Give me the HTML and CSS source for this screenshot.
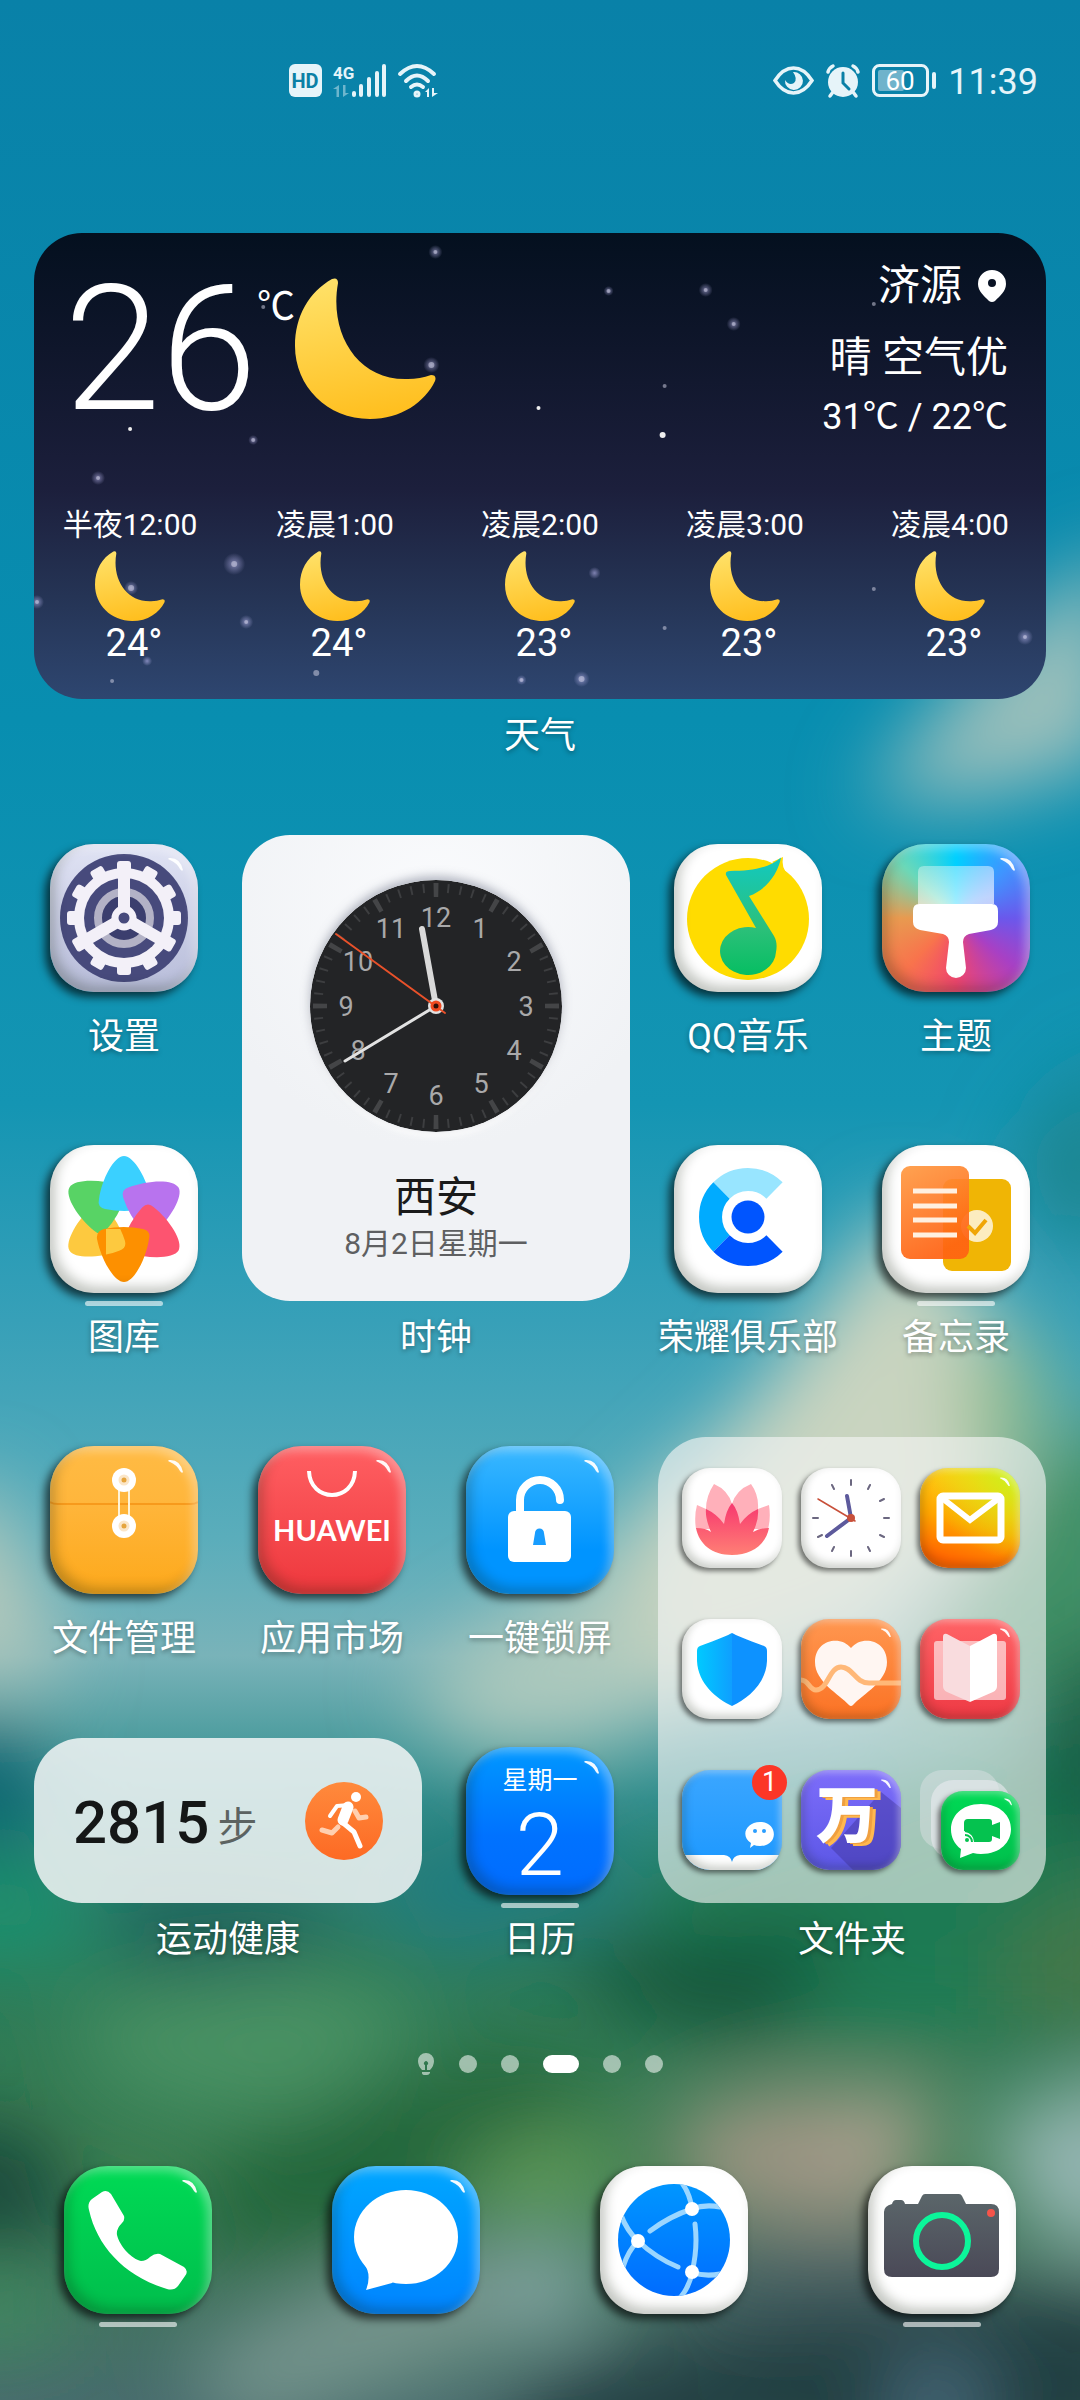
FILE: index.html
```html
<!DOCTYPE html>
<html lang="zh-CN">
<head>
  <meta charset="UTF-8" />
  <meta name="viewport" content="width=device-width, initial-scale=1.0" />
  <title>桌面</title>
  <link rel="stylesheet" href="styles.css">
</head>
<body>
  <!-- 共用图形 -->
  <svg class="defs" aria-hidden="true">
    <defs>
      <linearGradient id="moonFill" x1="0.3" y1="0" x2="0.5" y2="1">
        <stop offset="0" stop-color="#ffe168" />
        <stop offset="1" stop-color="#ffbf1f" />
      </linearGradient>
      <symbol id="moon" viewBox="0 0 141 141">
        <path fill="url(#moonFill)" d="M37 1Q43-1 43 5C34 55 62 103 113 101Q125 101 136 97Q142 97 140 103C130 124 106 141 75 141C32 141 0 108 0 68C0 38 14 14 37 1z" />
      </symbol>
      <symbol id="shine" viewBox="0 0 148 148">
        <path fill="#fff" opacity="0.950" d="M119 14Q130 13 133 26Q132 28 130 25Q127 19 120 16Q117 15 119 14z" />
      </symbol>
    </defs>
  </svg>

  <!-- 壁纸 -->
  <svg class="wallpaper" viewBox="0 0 1080 2400" preserveAspectRatio="none" aria-hidden="true">
    <defs>
      <linearGradient id="sky" x1="0" y1="0" x2="0" y2="1">
        <stop offset="0" stop-color="#0981a8" />
        <stop offset="0.3" stop-color="#088eb0" />
        <stop offset="0.46" stop-color="#1495b3" />
        <stop offset="0.55" stop-color="#37a0b8" />
        <stop offset="0.64" stop-color="#5aadbb" />
        <stop offset="0.69" stop-color="#79b3b9" />
        <stop offset="0.75" stop-color="#2f8d8c" />
        <stop offset="0.82" stop-color="#2b7a58" />
        <stop offset="0.9" stop-color="#3a7c50" />
        <stop offset="1" stop-color="#476c6c" />
      </linearGradient>
      <filter id="soft" x="-50%" y="-50%" width="200%" height="200%"><feGaussianBlur stdDeviation="40" /></filter>
    </defs>
    <rect width="1080" height="2400" fill="url(#sky)" />
    <g filter="url(#soft)">
      <path fill="#9cc0bb" d="M860 800L1000 640L1120 540V760L980 800z" />
      <path fill="#1d8289" d="M1020 1150L1120 1040V1260L1050 1230z" />
      <path fill="#c9d4c0" d="M740 1420L850 1270L900 1200L1000 1330L1010 1500L880 1640L700 1700L560 1680L610 1540z" />
      <path fill="#8dba88" d="M960 1360L1040 1330L1050 1440L980 1500z" />
      <path fill="#b6c9bb" d="M-80 1520L-10 1480L40 1600L60 1680L-80 1670z" />
      <path fill="#adc9bd" d="M400 1690L520 1610L640 1540V1740L480 1750z" />
      <path fill="#3f9066" d="M1000 1500L1160 1380V1760L1000 1700L880 1720z" />
      <path fill="#1c7a52" d="M660 1860L760 1840L1140 1700V2040H640z" />
      <path fill="#145a40" d="M1040 1680L1140 1620V1860L1040 1820z" />
      <path fill="#44774a" d="M1000 1940L1140 1860V2040L1000 2020z" />
      <path fill="#0f6470" d="M-80 1720L30 1740L60 1820L0 1860L-80 1840z" />
      <path fill="#1d8f6c" d="M-80 1860L60 1850L100 1960L-80 1970z" />
      <path fill="#1c5f5a" d="M110 1880L360 1900L280 1970L120 1960z" />
      <path fill="#217b7e" d="M340 1860L560 1800L640 1900L440 1960z" />
      <path fill="#4a9263" d="M60 2010L300 1970L440 2010L300 2130L120 2090z" />
      <path fill="#145138" d="M560 1950L860 1930L760 2040L620 2010z" />
      <path fill="#20663a" d="M240 2130L500 2050L620 2090L380 2240L180 2260z" />
      <path fill="#17473a" d="M-80 2110L50 2140L70 2250L-80 2240z" />
      <path fill="#3f9060" d="M-80 2290L60 2270L60 2340L-80 2340z" />
      <path fill="#5f9a5a" d="M460 2160L600 2120L620 2220L480 2220z" />
      <path fill="#9c9483" d="M660 2120L800 2080L920 2120L880 2230L700 2210z" />
      <path fill="#a9a08f" d="M840 2090L940 2090L920 2180L830 2200z" />
      <path fill="#94b5b2" d="M980 2120L1160 2060V2260L1040 2240z" />
      <path fill="#77958e" d="M180 2370L300 2300L420 2250L560 2250L600 2310L400 2380L240 2430z" />
      <path fill="#8aabaa" d="M500 2250L600 2250L590 2330L500 2320z" />
      <path fill="#4a6466" d="M700 2240L940 2230L1000 2300L660 2320z" />
      <path fill="#203f42" d="M560 2370L800 2310L1160 2280V2480H460z" />
      <path fill="#4f7386" d="M900 2370H990L970 2440H890z" />
    </g>
  </svg>

  <header class="status-bar">
    <div class="status-group">
      <svg width="33" height="33" viewBox="0 0 33 33"><rect width="33" height="33" rx="6" fill="#e6f4f9" /><text x="16" y="24" text-anchor="middle" font-size="20" font-weight="700" fill="#0a80a6">HD</text></svg>
      <svg width="54" height="33" viewBox="0 0 54 33" fill="#e6f4f9">
        <text x="0" y="15" font-size="17" font-weight="700">4G</text>
        <g opacity="0.45"><path d="M6 21v12H3.500v-8H0z" /><path d="M10 33V21h2.500v8H16z" /></g>
        <rect x="19" y="27" width="4" height="6" rx="2" /><rect x="26" y="20" width="4" height="13" rx="2" /><rect x="34" y="13" width="4" height="20" rx="2" /><rect x="42" y="7" width="4" height="26" rx="2" /><rect x="49" y="0" width="4" height="33" rx="2" />
      </svg>
      <svg width="41" height="33" viewBox="0 0 41 33" fill="none" stroke="#e6f4f9" stroke-width="4" stroke-linecap="round">
        <path d="M2 10Q19-6 36 10M8 17Q19 6 30 17M13 23Q19 18 25 23" /><circle cx="19" cy="30" r="1.500" />
        <path fill="#e6f4f9" stroke="none" d="M31 24v9h-2v-5h-2zM34 33v-9h2v5h4z" />
      </svg>
    </div>
    <div class="status-group">
      <svg width="41" height="33" viewBox="0 0 41 33"><path d="M2 16.500Q10 4 20.500 4T39 16.500Q31 29 20.500 29T2 16.500z" fill="none" stroke="#e6f4f9" stroke-width="3.500" /><path d="M20 8a9 9 0 1 1-8 8q4 6 9 3q4-4-1-11z" fill="#e6f4f9" /></svg>
      <svg width="36" height="33" viewBox="0 0 36 33"><circle cx="18" cy="18" r="15" fill="#e6f4f9" /><path d="M3 8Q4 4 8 2M33 8Q32 4 28 2M8 28l-3 4M28 28l3 4" stroke="#e6f4f9" stroke-width="3.500" stroke-linecap="round" fill="none" /><path d="M18 9v10l6 6" stroke="#0a80a6" stroke-width="3" stroke-linecap="round" fill="none" /></svg>
      <svg width="65" height="33" viewBox="0 0 65 33"><rect x="1.500" y="1.500" width="54" height="30" rx="6" fill="none" stroke="#e6f4f9" stroke-width="3" /><rect x="6" y="6" width="26" height="21" rx="2" fill="#6fb3cb" /><rect x="60" y="8" width="4" height="17" rx="2" fill="#e6f4f9" /><text x="28" y="26" text-anchor="middle" font-size="26" fill="#fff">60</text></svg>
      <time class="status-time">11:39</time>
    </div>
  </header>

  <main class="home">
    <!-- 天气 -->
    <section class="tile tile-weather">
      <div class="widget weather">
        <svg class="stars" viewBox="0 0 1011 466" preserveAspectRatio="none" aria-hidden="true">
          <defs><radialGradient id="halo"><stop offset="0" stop-color="#c8c4ff" stop-opacity="0.550" /><stop offset="1" stop-color="#c8c4ff" stop-opacity="0" /></radialGradient></defs>
          <g fill="url(#halo)">
            <circle cx="401" cy="19" r="7" /><circle cx="397" cy="132" r="8" /><circle cx="219" cy="207" r="5" /><circle cx="64" cy="245" r="7" /><circle cx="200" cy="331" r="11" /><circle cx="97" cy="355" r="7" /><circle cx="3" cy="369" r="7" /><circle cx="212" cy="389" r="7" /><circle cx="113" cy="428" r="5" /><circle cx="671" cy="57" r="7" /><circle cx="699" cy="91" r="7" /><circle cx="560" cy="340" r="6" /><circle cx="990" cy="404" r="8" /><circle cx="547" cy="446" r="8" /><circle cx="574" cy="58" r="5" /><circle cx="487" cy="447" r="5" />
          </g>
          <g fill="#d8d8ea" opacity="0.5">
            <circle cx="401" cy="19" r="2" /><circle cx="229" cy="74" r="2" /><circle cx="397" cy="132" r="3" /><circle cx="219" cy="207" r="2" /><circle cx="64" cy="245" r="2" /><circle cx="200" cy="331" r="3" /><circle cx="97" cy="355" r="3" /><circle cx="3" cy="369" r="2" /><circle cx="212" cy="389" r="2" /><circle cx="78" cy="448" r="2" /><circle cx="282" cy="440" r="3" /><circle cx="487" cy="447" r="2" /><circle cx="574" cy="58" r="2" /><circle cx="671" cy="57" r="2" /><circle cx="699" cy="91" r="2" /><circle cx="839" cy="71" r="2" /><circle cx="630" cy="153" r="2" /><circle cx="839" cy="356" r="2" /><circle cx="630" cy="395" r="2" /><circle cx="990" cy="404" r="2" /><circle cx="547" cy="446" r="3" />
          </g>
          <g fill="#eee"><circle cx="504" cy="175" r="2" /><circle cx="96" cy="196" r="2" /><circle cx="628" cy="202" r="3" /></g>
        </svg>
        <div class="weather-now">
          <span class="weather-temp">26</span>
          <span class="weather-unit">℃</span>
          <svg class="weather-moon"><use href="#moon" /></svg>
          <div class="weather-place">
            <p class="weather-city">济源
              <svg width="28" height="32" viewBox="0 0 28 32"><path fill="#fff" fill-rule="evenodd" d="M14 0a14 14 0 0 1 14 14c0 7-6 12-11 17q-3 2-6 0C6 26 0 21 0 14A14 14 0 0 1 14 0zm0 9a4 4 0 1 0 0 8a4 4 0 0 0 0-8z" /></svg>
            </p>
            <p class="weather-air">晴 空气优</p>
            <p class="weather-range">31℃ / 22℃</p>
          </div>
        </div>
        <ul class="hours">
          <li><span class="hour-time">半夜12:00</span><svg><use href="#moon" /></svg><span class="hour-temp">24°</span></li>
          <li><span class="hour-time">凌晨1:00</span><svg><use href="#moon" /></svg><span class="hour-temp">24°</span></li>
          <li><span class="hour-time">凌晨2:00</span><svg><use href="#moon" /></svg><span class="hour-temp">23°</span></li>
          <li><span class="hour-time">凌晨3:00</span><svg><use href="#moon" /></svg><span class="hour-temp">23°</span></li>
          <li><span class="hour-time">凌晨4:00</span><svg><use href="#moon" /></svg><span class="hour-temp">23°</span></li>
        </ul>
      </div>
      <span class="label">天气</span>
    </section>

    <a class="app" href="#">
      <span class="icon icon-settings">
        <svg viewBox="0 0 148 148">
          <circle cx="74" cy="74" r="64" fill="#474a7c" />
          <g fill="#f3f0f8">
            <rect x="67" y="17" width="14" height="114" rx="3" />
            <rect x="67" y="17" width="14" height="114" rx="3" transform="rotate(30 74 74)" />
            <rect x="67" y="17" width="14" height="114" rx="3" transform="rotate(60 74 74)" />
            <rect x="67" y="17" width="14" height="114" rx="3" transform="rotate(90 74 74)" />
            <rect x="67" y="17" width="14" height="114" rx="3" transform="rotate(120 74 74)" />
            <rect x="67" y="17" width="14" height="114" rx="3" transform="rotate(150 74 74)" />
            <circle cx="74" cy="74" r="50" />
          </g>
          <circle cx="74" cy="74" r="40" fill="#474a7c" />
          <circle cx="74" cy="74" r="26" fill="#3b3e6e" stroke="#b3b2c6" stroke-width="8" />
          <g stroke="#f3f0f8" stroke-width="12">
            <path d="M74 74V30M74 74L36 96M74 74l38 22" />
          </g>
          <circle cx="74" cy="74" r="9" fill="#474a7c" stroke="#f3f0f8" stroke-width="7" />
          <use href="#shine" />
        </svg>
      </span>
      <span class="label">设置</span>
    </a>

    <!-- 时钟 -->
    <section class="tile tile-clock">
      <div class="widget clock">
        <svg class="dial" viewBox="-126 -126 252 252">
          <circle r="126" fill="#232426" />
          <circle r="118" fill="none" stroke="#3d3e40" stroke-width="9" pathLength="600" stroke-dasharray="1.600 8.400" stroke-dashoffset="0.800" />
          <circle r="116" fill="none" stroke="#444547" stroke-width="14" pathLength="120" stroke-dasharray="0.800 9.200" stroke-dashoffset="0.400" />
          <g class="dial-numbers">
            <text x="0" y="-79">12</text><text x="44" y="-68">1</text><text x="78" y="-35">2</text><text x="90" y="10">3</text><text x="78" y="54">4</text><text x="45" y="87">5</text><text x="0" y="99">6</text><text x="-45" y="87">7</text><text x="-78" y="54">8</text><text x="-90" y="10">9</text><text x="-78" y="-35">10</text><text x="-45" y="-68">11</text>
          </g>
          <path d="M0 0L-14-77" stroke="#d9d9d9" stroke-width="6" stroke-linecap="round" />
          <path d="M0 0L-91 55" stroke="#e2e2e2" stroke-width="3" stroke-linecap="round" />
          <circle r="8" fill="#e2e2e2" />
          <path d="M9 7L-100-72" stroke="#e8512a" stroke-width="2" stroke-linecap="round" />
          <circle r="4" fill="#301008" stroke="#f04a20" stroke-width="3" />
        </svg>
        <p class="clock-city">西安</p>
        <p class="clock-date">8月2日星期一</p>
      </div>
      <span class="label">时钟</span>
    </section>

    <a class="app" href="#">
      <span class="icon">
        <svg viewBox="0 0 148 148">
          <defs><linearGradient id="note" x1="0" y1="0" x2="0" y2="1"><stop offset="0" stop-color="#12c9c0" /><stop offset="0.6" stop-color="#2cc07a" /><stop offset="1" stop-color="#06be62" /></linearGradient></defs>
          <circle cx="74" cy="75" r="61" fill="#ffdc00" /><path d="M98 18L109 13Q107 24 114 30z" fill="#ffdc00" />
          <path fill="url(#note)" d="M52 31Q51 27 56 27C78 27 95 24 107 13.500C104 30 92 46 75 52L100 92C103 97 103 103 102 108A28 24 0 1 1 82 84z" />
        </svg>
      </span>
      <span class="label">QQ音乐</span>
    </a>

    <a class="app" href="#">
      <span class="icon icon-theme">
        <svg viewBox="0 0 148 148">
          <defs><linearGradient id="brush" x1="0" y1="0" x2="0.6" y2="1"><stop offset="0" stop-color="#fff" stop-opacity="0.350" /><stop offset="1" stop-color="#fff" stop-opacity="0.650" /></linearGradient></defs>
          <path fill="url(#brush)" d="M36 60V28Q36 22 42 22H106Q112 22 112 28V60z" />
          <path fill="#fff" d="M37 60H110Q116 60 116 67V78Q116 84 109 86L87 90Q81 92 81 98L84 124A10 10 0 0 1 64 124L67 98Q67 92 61 90L38 86Q31 84 31 78V67Q31 60 37 60z" />
          <use href="#shine" />
        </svg>
      </span>
      <span class="label">主题</span>
    </a>

    <a class="app" href="#">
      <span class="icon active">
        <svg viewBox="0 0 148 148">
          <defs>
            <path id="petal" d="M74 11C84 11 97 34 101 54Q102 62 94 64Q74 68 55 64Q47 62 49 54C52 34 64 11 74 11z" />
            <clipPath id="yellowTop"><rect x="56" y="84" width="40" height="50" /></clipPath>
          </defs>
          <use href="#petal" fill="#fdc93f" transform="rotate(240 74 74)" />
          <use href="#petal" fill="#58d365" transform="rotate(300 74 74)" />
          <use href="#petal" fill="#3ad0ff" />
          <use href="#petal" fill="#b873ee" transform="rotate(60 74 74)" />
          <use href="#petal" fill="#fd5470" transform="rotate(120 74 74)" />
          <use href="#petal" fill="#fd9000" transform="rotate(180 74 74)" />
          <g clip-path="url(#yellowTop)"><use href="#petal" fill="#fdc93f" transform="rotate(240 74 74)" /></g>
        </svg>
      </span>
      <span class="label">图库</span>
    </a>

    <a class="app" href="#">
      <span class="icon">
        <svg viewBox="0 0 148 148" fill="none" stroke-width="23">
          <path d="M100.500 45.500A37.500 37.500 0 0 0 47.500 45.500" stroke="#98e5ff" />
          <path d="M47.500 45.500A37.500 37.500 0 0 0 47.500 98.500" stroke="#00abff" />
          <path d="M47.500 98.500A37.500 37.500 0 0 0 100.500 98.500" stroke="#0055ff" />
          <circle cx="74" cy="72" r="16.500" fill="#0055ff" stroke="none" />
        </svg>
      </span>
      <span class="label">荣耀俱乐部</span>
    </a>

    <a class="app" href="#">
      <span class="icon active">
        <svg viewBox="0 0 148 148">
          <defs><linearGradient id="memo" x1="0" y1="0" x2="0.400" y2="1"><stop offset="0" stop-color="#ff9a42" /><stop offset="1" stop-color="#ff6212" /></linearGradient></defs>
          <rect x="61" y="34" width="68" height="92" rx="9" fill="#f0b505" />
          <circle cx="95" cy="81" r="16" fill="#fcecc0" />
          <rect x="19" y="21" width="68" height="93" rx="9" fill="url(#memo)" opacity="0.920" />
          <path d="M86 81l7 7l11-13" fill="none" stroke="#f0a505" stroke-width="4" />
          <path d="M31 46H75M31 61H75M31 75H75M31 90H75" stroke="#fff0e0" stroke-width="5" />
        </svg>
      </span>
      <span class="label">备忘录</span>
    </a>

    <a class="app" href="#">
      <span class="icon icon-files">
        <svg viewBox="0 0 148 148">
          <path d="M0 56Q3 58 8 58H140Q145 58 148 56" fill="none" stroke="#f79a1c" stroke-width="2" />
          <path d="M69 34V80M79 34V80" stroke="#fff3d6" stroke-width="2" />
          <g fill="#fff"><circle cx="74" cy="34" r="12" /><circle cx="74" cy="80" r="12" /></g>
          <g fill="#e5a53e" stroke="#fbe6c8" stroke-width="3"><circle cx="74" cy="34" r="4" /><circle cx="74" cy="80" r="4" /></g>
          <use href="#shine" />
        </svg>
      </span>
      <span class="label">文件管理</span>
    </a>

    <a class="app" href="#">
      <span class="icon icon-market">
        <svg viewBox="0 0 148 148">
          <path d="M51 25C52 57 96 57 97 25" fill="none" stroke="#fff" stroke-width="4" />
          <text class="brand" x="74" y="95" text-anchor="middle">HUAWEI</text>
          <use href="#shine" />
        </svg>
      </span>
      <span class="label">应用市场</span>
    </a>

    <a class="app" href="#">
      <span class="icon icon-lock">
        <svg viewBox="0 0 148 148">
          <path d="M54 68V54A20 20 0 0 1 94 54" fill="none" stroke="#fff" stroke-width="8" stroke-linecap="round" />
          <rect x="42" y="65" width="63" height="51" rx="6" fill="#fff" />
          <path d="M69 87a4 4 0 0 1 9 0l2 12H67z" fill="#189dff" />
          <use href="#shine" />
        </svg>
      </span>
      <span class="label">一键锁屏</span>
    </a>

    <!-- 文件夹 -->
    <section class="tile tile-folder">
      <div class="widget folder">
        <a class="icon mini" href="#" aria-label="花瓣">
          <svg viewBox="0 0 100 100">
            <defs><linearGradient id="lotus" x1="0" y1="0" x2="0" y2="1"><stop offset="0" stop-color="#f7386f" /><stop offset="1" stop-color="#ff7f75" /></linearGradient></defs>
            <path fill="#ffb0ba" d="M32 16Q46 22 50 36Q54 22 69 16Q77 27 76 41L87 37Q89 50 86 61H14Q12 48 15 37L24 41Q24 28 32 16z" />
            <path fill="url(#lotus)" d="M14 60Q24 60 29 64Q23 50 24 41Q35 46 42 56Q44 42 50 35Q56 42 58 56Q65 46 76 41Q77 52 71 64Q78 60 87 60C84 76 70 87 50 87C30 87 17 76 14 60z" />
          </svg>
        </a>
        <a class="icon mini" href="#" aria-label="时钟">
          <svg viewBox="0 0 100 100" fill="none" stroke-linecap="round">
            <path stroke="#6b6780" stroke-width="2" d="M50 12v5M50 83v5M12 50h5M83 50h5M31 17l2 4M67 79l2 4M17 69l4-2M79 33l4-2M69 17l-2 4M33 79l-2 4M79 67l4 2" />
            <path stroke="#5d5a9c" stroke-width="4" d="M50 50L46 28M50 50L26 68" />
            <path stroke="#c8503a" stroke-width="1.500" d="M54 53L17 31" /><circle cx="50" cy="50" r="4" fill="#c8503a" />
          </svg>
        </a>
        <a class="icon mini icon-mail" href="#" aria-label="邮件">
          <svg viewBox="0 0 100 100">
            <rect x="20" y="28" width="61" height="44" rx="3" fill="none" stroke="#fff" stroke-width="7" />
            <path d="M22 30L50 52L79 30" fill="none" stroke="#fff" stroke-width="6" /><use href="#shine" />
          </svg>
        </a>
        <a class="icon mini" href="#" aria-label="手机管家">
          <svg viewBox="0 0 100 100">
            <defs><linearGradient id="shield"><stop offset="0" stop-color="#00caff" /><stop offset="1" stop-color="#0f9fff" /></linearGradient></defs>
            <path fill="url(#shield)" d="M50 14Q45 17 18 27Q15 28 15 32V42C16 65 35 80 50 87z" />
            <path fill="#0d92ff" d="M50 14Q55 17 82 27Q85 28 85 32V42C84 65 65 80 50 87z" />
          </svg>
        </a>
        <a class="icon mini icon-health" href="#" aria-label="运动健康">
          <svg viewBox="0 0 100 100">
            <path fill="#fff6f2" d="M50 29C60 16 86 20 86 43C86 63 62 75 52 86Q50 88 48 86C38 75 14 63 14 43C14 20 40 16 50 29z" />
            <path d="M0 61C8 61 8 71 15 71C27 71 28 48 40 48C52 48 54 64 68 64H100" fill="none" stroke="#ffb878" stroke-width="5" /><use href="#shine" />
          </svg>
        </a>
        <a class="icon mini icon-read" href="#" aria-label="阅读">
          <svg viewBox="0 0 100 100">
            <rect x="14" y="22" width="72" height="59" rx="3" fill="#fff" opacity="0.600" />
            <path fill="#f9dcde" d="M50 27Q40 22 27 15Q23 14 23 18V67Q23 71 27 73L50 83z" />
            <path fill="#fff" d="M50 27Q60 22 73 15Q77 14 77 18V67Q77 71 73 73L50 83z" /><use href="#shine" />
          </svg>
        </a>
        <a class="icon mini icon-weread" href="#" aria-label="微信读书">
          <svg viewBox="0 0 100 100">
            <path fill="#fff" d="M0 85H42Q49 86 50 92Q51 86 58 85H100V100H0z" />
            <path fill="#fff" d="M78 52c18 0 19 24 0 24q-4 0-6-1l-4 3l1-5c-11-7-5-21 9-21z" />
            <circle cx="73" cy="61" r="2" fill="#2a9eff" /><circle cx="82" cy="61" r="2" fill="#2a9eff" />
          </svg>
          <span class="badge">1</span>
        </a>
        <a class="icon mini icon-wan" href="#">
          <svg viewBox="0 0 100 100"><path d="M30 78L80 22L100 38V100H52z" fill="#463aa8" opacity="0.550" /><use href="#shine" /></svg>
          <span class="wan">万</span>
        </a>
        <div class="stack">
          <span class="stack-card stack-back"></span>
          <span class="stack-card stack-middle"></span>
          <a class="icon stack-card stack-front" href="#" aria-label="畅连">
            <svg viewBox="0 0 79 79">
              <path fill="#fff" d="M40 13c40 0 40 50 0 50q-4 0-8-1L19 67l1-9C2 45 8 13 40 13z" />
              <path fill="#05c24f" d="M27 28H48Q51 28 51 31V34L59 31V48L51 45V48Q51 51 48 51H34Q33 40 23 40V32Q23 28 27 28z" />
              <path d="M24 44a7 7 0 0 1 7 7M24 40a11 11 0 0 1 10 11" fill="none" stroke="#05c24f" stroke-width="2" /><circle cx="26" cy="49" r="2" fill="#05c24f" /><use href="#shine" />
            </svg>
          </a>
        </div>
      </div>
      <span class="label">文件夹</span>
    </section>

    <!-- 运动健康 -->
    <section class="tile tile-steps">
      <div class="widget steps">
        <span class="steps-count">2815</span><span class="steps-unit">步</span>
        <svg class="runner" viewBox="0 0 78 78" fill="none" stroke-linecap="round" stroke-linejoin="round">
          <defs><linearGradient id="run" x1="0" y1="0" x2="0" y2="1"><stop offset="0" stop-color="#ff8a3c" /><stop offset="1" stop-color="#fd6a24" /></linearGradient></defs>
          <circle cx="39" cy="39" r="39" fill="url(#run)" />
          <path d="M33 45L27 51L17 48M50 29L54 36L61 35" stroke="#ffcfb0" stroke-width="5" />
          <path d="M44 23L32 24L25 34" stroke="#fff" stroke-width="4" />
          <path d="M43 25L38 38" stroke="#fff" stroke-width="11" />
          <path d="M37 40L49 50L55 64" stroke="#fff" stroke-width="5" />
          <circle cx="51" cy="15" r="5" fill="#fff" />
        </svg>
      </div>
      <span class="label">运动健康</span>
    </section>

    <a class="app" href="#">
      <span class="icon icon-calendar active">
        <svg viewBox="0 0 148 148" fill="#fff" text-anchor="middle">
          <text x="74" y="42" font-size="25">星期一</text>
          <text x="74" y="128" font-size="87" font-weight="300">2</text>
          <use href="#shine" />
        </svg>
      </span>
      <span class="label">日历</span>
    </a>
  </main>

  <div class="pager">
    <svg viewBox="0 0 18 22"><path fill="#fff" fill-rule="evenodd" d="M9 0a8 8 0 0 1 8 8q0 5-4 9H10V12a2 2 0 1 0-2 0v5H5Q1 13 1 8a8 8 0 0 1 8-8zM5 19h8v1q-1 2-3 2H8q-3 0-3-2z" /></svg>
    <span></span><span></span><span class="current"></span><span></span><span></span>
  </div>

  <nav class="dock">
    <a class="icon icon-phone active" href="#" aria-label="电话">
      <svg viewBox="0 0 148 148">
        <path fill="#fff" d="M25 44Q23 37 28 33L38 26Q43 23 47 28L60 50Q61 54 58 57Q52 63 53 69C56 81 68 93 77 95Q82 95 86 91Q91 87 96 88L120 101Q125 105 121 110L114 120Q110 125 103 123C60 110 33 80 25 44z" />
        <use href="#shine" />
      </svg>
    </a>
    <a class="icon icon-sms" href="#" aria-label="信息">
      <svg viewBox="0 0 148 148">
        <ellipse cx="74" cy="71" rx="52" ry="47" fill="#fff" /><path fill="#fff" d="M32 98Q40 108 34 124L60 117L74 100z" />
        <use href="#shine" />
      </svg>
    </a>
    <a class="icon" href="#" aria-label="浏览器">
      <svg viewBox="0 0 148 148">
        <defs>
          <linearGradient id="globe" x1="0" y1="0" x2="0" y2="1"><stop offset="0" stop-color="#0096ff" /><stop offset="1" stop-color="#006cff" /></linearGradient>
          <clipPath id="globeClip"><circle cx="74" cy="74" r="56" /></clipPath>
        </defs>
        <circle cx="74" cy="74" r="56" fill="url(#globe)" />
        <g clip-path="url(#globeClip)" fill="none" stroke="#9bd6ff" stroke-width="5" stroke-linecap="round">
          <path d="M82 17Q90 28 92 43Q105 38 120 41M92 43Q70 50 50 65M21 49Q27 65 38 75Q28 85 23 101M38 75Q56 92 78 101M95 58Q98 82 92 106Q104 111 120 108M92 106Q90 120 80 132" />
        </g>
        <g fill="#fff"><circle cx="92" cy="43" r="7" /><circle cx="38" cy="75" r="7" /><circle cx="92" cy="106" r="7" /></g>
      </svg>
    </a>
    <a class="icon active" href="#" aria-label="相机">
      <svg viewBox="0 0 148 148">
        <defs><linearGradient id="cam" x1="0" y1="0" x2="0" y2="1"><stop offset="0" stop-color="#5b666a" /><stop offset="1" stop-color="#4a4957" /></linearGradient></defs>
        <path fill="url(#cam)" d="M24 38Q25 34 28 34H33Q36 34 37 38H50L54 30Q55 28 57 28H91Q93 28 94 30L98 38H123Q131 38 131 46V103Q131 111 123 111H24Q16 111 16 103V46Q16 40 24 38z" />
        <circle cx="74" cy="75" r="26" fill="none" stroke="#0cf59a" stroke-width="6" />
        <circle cx="123" cy="47" r="4" fill="#f6544a" />
      </svg>
    </a>
  </nav>
</body>
</html>
```

FILE: styles.css
```css
* {
  box-sizing: border-box;
}
body {
  margin: 0;
  position: relative;
  min-height: 100vh;
  font-family: Roboto, "Noto Sans CJK SC", sans-serif;
  color: #fff;
  background: #0981a8;
}
p, ul {
  margin: 0;
  padding: 0;
  list-style: none;
}
a {
  color: inherit;
  text-decoration: none;
}
svg {
  display: block;
}
.defs {
  position: absolute;
  width: 0;
  height: 0;
}
.wallpaper {
  position: absolute;
  inset: 0;
  width: 100%;
  height: 100%;
  z-index: -1;
}

/* 状态栏 */
.status-bar {
  display: flex;
  justify-content: space-between;
  padding: 56px 42px 0 289px;
}
.status-group {
  display: flex;
  align-items: center;
  gap: 11px;
  height: 48px;
}
.status-group svg {
  overflow: visible;
}
.status-time {
  font-size: 36px;
  line-height: 42px;
  margin-top: 4px;
  color: #e6f4f9;
}

/* 桌面网格 */
.home {
  display: grid;
  grid-template-columns: repeat(5, 1fr);
  grid-auto-rows: 226px;
  row-gap: 75px;
  padding: 129px 20px 0;
}
.tile {
  display: flex;
  flex-direction: column;
  padding: 0 14px;
}
.tile-weather {
  grid-column: span 5;
  grid-row: span 2;
}
.tile-clock, .tile-folder {
  grid-column: span 2;
  grid-row: span 2;
}
.tile-steps {
  grid-column: span 2;
}
.widget {
  flex: 1;
  border-radius: 48px;
}
.label {
  font-size: 36px;
  line-height: 48px;
  margin-top: 13px;
  text-align: center;
  white-space: nowrap;
  text-shadow: 0 2px 5px rgba(0, 0, 0, 0.35);
}
.app {
  display: flex;
  flex-direction: column;
  align-items: center;
  padding-top: 9px;
}
.app .label {
  margin-top: 21px;
}

/* 图标 */
.icon {
  position: relative;
  display: block;
  width: 148px;
  height: 148px;
  border-radius: 44px;
  background: #fff;
  box-shadow: -5px 5px 9px rgba(0, 0, 0, 0.65);
}
.icon > svg {
  width: 100%;
  height: 100%;
  border-radius: inherit;
}
.icon::after {
  content: "";
  position: absolute;
  inset: 0;
  border-radius: inherit;
  box-shadow: inset -5px 5px 10px rgba(255, 255, 255, 0.35), inset 5px -6px 12px rgba(20, 30, 10, 0.25);
}
.icon.active::before {
  content: "";
  position: absolute;
  left: 35px;
  right: 35px;
  bottom: -13px;
  height: 5px;
  border-radius: 3px;
  background: rgba(255, 255, 255, 0.6);
}
.icon-settings { background: linear-gradient(#e0e3f4, #b7bcd9); }
.icon-theme { background: conic-gradient(#00d0ff, #3f95ff 45deg, #6a58ec 90deg, #a840c4 130deg, #f0466e 180deg, #f8744c 225deg, #e89a50 270deg, #6bd8b8 315deg, #00d0ff); }
.icon-files { background: linear-gradient(#ffbb44 0, #ffb63c 38%, #ffb53a 40%, #fda91b); }
.icon-market { background: linear-gradient(#ff5f62, #ee383d); }
.icon-lock { background: linear-gradient(#3ab8ff, #0094ff 70%); }
.icon-mail { background: radial-gradient(circle at 100% 0, #c4f41c, rgba(220, 230, 20, 0.6) 35%, transparent 65%), linear-gradient(15deg, #ff6400 12%, #ffa400 45%, #ffd61a 90%); }
.icon-health { background: linear-gradient(#ff9750, #fb7224); }
.icon-read { background: linear-gradient(#ff6466, #ee3944); }
.icon-weread { background: linear-gradient(#3ba6ff, #1c98ff); }
.icon-wan { background: linear-gradient(#7d6dfa, #5c57e6); }
.icon-calendar { background: linear-gradient(#0098ff, #0072ff 60%, #006cff); }
.icon-phone { background: linear-gradient(#00da55, #00be4c); }
.icon-sms { background: linear-gradient(#00a6ff, #0084ff); }
.brand {
  font-family: Lato, sans-serif;
  font-size: 29px;
  font-weight: 700;
  fill: #fff;
}

/* 天气 */
.weather {
  position: relative;
  display: flex;
  flex-direction: column;
  justify-content: space-between;
  overflow: hidden;
  background: linear-gradient(#04101f, #0f162b 25%, #1c1f3c 55%, #253455 78%, #2e4670);
}
.stars {
  position: absolute;
  inset: 0;
  width: 100%;
  height: 100%;
}
.weather-now {
  position: relative;
  display: flex;
  align-items: flex-start;
  padding: 17px 38px 0 30px;
}
.weather-temp {
  font-size: 174px;
  font-weight: 300;
  line-height: 200px;
}
.weather-unit {
  font-size: 38px;
  line-height: 44px;
  margin-top: 34px;
}
.weather-moon {
  width: 141px;
  height: 141px;
  margin-top: 28px;
}
.weather-place {
  margin-left: auto;
  text-align: right;
}
.weather-city, .weather-air {
  font-size: 42px;
  line-height: 72px;
}
.weather-city {
  display: flex;
  justify-content: flex-end;
  align-items: center;
  gap: 16px;
  padding-right: 2px;
}
.weather-range {
  font-size: 36px;
  line-height: 46px;
}
.hours {
  position: relative;
  display: flex;
  justify-content: space-between;
  padding: 0 26px 34px;
}
.hours li {
  display: flex;
  flex-direction: column;
  align-items: center;
  width: 140px;
}
.hours svg {
  width: 70px;
  height: 70px;
}
.hour-time {
  font-size: 30px;
  line-height: 34px;
  margin-bottom: 9px;
  white-space: nowrap;
}
.hour-temp {
  font-size: 38px;
  line-height: 44px;
  padding-left: 8px;
}

/* 时钟 */
.clock {
  display: flex;
  flex-direction: column;
  align-items: center;
  padding-top: 45px;
  text-align: center;
  background: radial-gradient(circle at 50% 15%, #fafbfd, #f0f2f5 55%);
}
.dial {
  width: 252px;
  height: 252px;
  border-radius: 50%;
  box-shadow: 0 -4px 10px rgba(110, 115, 135, 0.5), 0 5px 6px #fff;
}
.dial-numbers {
  font-size: 27px;
  fill: #a9a9aa;
  text-anchor: middle;
}
.clock-city {
  margin-top: 41px;
  font-size: 42px;
  line-height: 50px;
  color: #1a1a1a;
}
.clock-date {
  font-size: 30px;
  line-height: 42px;
  color: #5e5f61;
}

/* 文件夹 */
.folder {
  display: grid;
  grid-template-columns: repeat(3, 100px);
  justify-content: space-between;
  align-content: start;
  row-gap: 51px;
  padding: 31px 26px 31px 24px;
  background: rgba(245, 245, 245, 0.62);
}
.mini {
  width: 100px;
  height: 100px;
  border-radius: 28px;
  box-shadow: -3px 3px 5px rgba(0, 0, 0, 0.5);
}
.mini::after, .stack-front::after {
  box-shadow: inset -3px 3px 6px rgba(255, 255, 255, 0.35), inset 3px -4px 8px rgba(20, 30, 10, 0.22);
}
.badge {
  position: absolute;
  top: -5px;
  right: -5px;
  z-index: 1;
  width: 35px;
  height: 35px;
  border-radius: 50%;
  font-size: 27px;
  line-height: 35px;
  text-align: center;
  background: #fc3626;
}
.wan {
  position: absolute;
  inset: 0;
  padding-right: 8px;
  font-size: 62px;
  font-weight: 900;
  line-height: 94px;
  text-align: center;
  text-shadow: 3px 1px 0 #f0a040, 6px 3px 0 #ffb84e;
}
.stack {
  position: relative;
  height: 100px;
}
.stack-card {
  position: absolute;
  width: 79px;
  height: 79px;
  border-radius: 22px;
}
.stack-back {
  top: 0;
  left: 0;
  background: rgba(230, 230, 235, 0.4);
}
.stack-middle {
  top: 10px;
  left: 11px;
  background: rgba(235, 235, 240, 0.6);
}
.stack-front {
  right: 0;
  bottom: 0;
  background: linear-gradient(#00da55, #00be4c);
  box-shadow: -3px 3px 5px rgba(0, 0, 0, 0.5);
}

/* 运动健康 */
.steps {
  display: flex;
  align-items: center;
  padding: 0 39px;
  background: rgba(238, 243, 242, 0.88);
}
.steps-count {
  font-size: 60px;
  font-weight: 500;
  line-height: 70px;
  margin-top: 4px;
  color: #151717;
}
.steps-unit {
  margin: 14px 0 0 8px;
  font-size: 40px;
  line-height: 48px;
  color: #5c6361;
}
.runner {
  width: 78px;
  height: 78px;
  margin-left: auto;
}

/* 页码 */
.pager {
  display: flex;
  justify-content: center;
  align-items: center;
  gap: 24px;
  height: 22px;
  margin-top: 89px;
}
.pager svg {
  width: 18px;
  height: 22px;
  opacity: 0.55;
}
.pager span {
  width: 18px;
  height: 18px;
  border-radius: 9px;
  background: rgba(255, 255, 255, 0.55);
}
.pager .current {
  width: 36px;
  background: #fff;
}

/* 底栏 */
.dock {
  display: grid;
  grid-template-columns: repeat(4, 1fr);
  justify-items: center;
  padding: 91px 4px 86px;
}
```
